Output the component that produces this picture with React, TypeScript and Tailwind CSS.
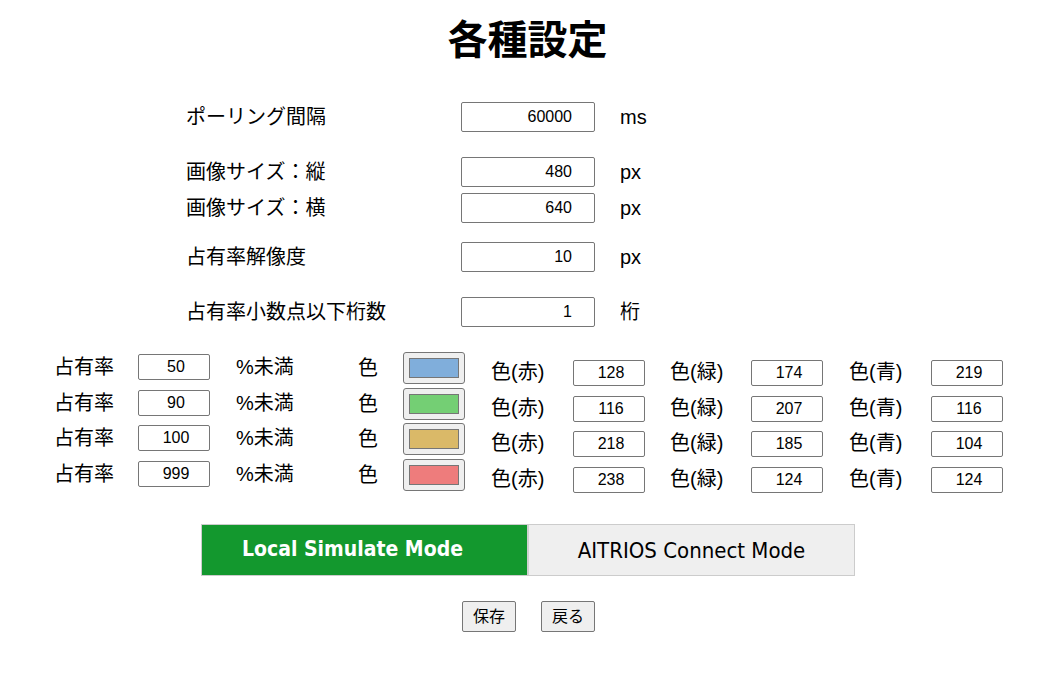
import React from "react";

const FONT = { fontFamily: '"Liberation Sans","Noto Sans CJK JP",sans-serif' };

function TopRow({ label, value, unit, mt }: { label: string; value: string; unit: string; mt: string }) {
  return (
    <div className={`flex items-center h-[30px] ${mt}`}>
      <div className="w-[275px] text-[20px] leading-[30px] text-black">{label}</div>
      <input
        readOnly
        value={value}
        className="block w-[134px] h-[30px] border border-[#767676] rounded-[2px] text-right pr-[22px] text-[16px] text-black bg-white outline-none"
        style={FONT}
      />
      <div className="ml-[25px] text-[20px] leading-[30px] text-black">{unit}</div>
    </div>
  );
}

function SmallInput({ value }: { value: string }) {
  return (
    <input
      readOnly
      value={value}
      className="block w-[72px] h-[26px] border border-[#767676] rounded-[2px] text-center pl-[4px] text-[16px] text-black bg-white outline-none"
      style={FONT}
    />
  );
}

const rows = [
  { th: "50", swatch: "#80aedb", r: "128", g: "174", b: "219" },
  { th: "90", swatch: "#74cf74", r: "116", g: "207", b: "116" },
  { th: "100", swatch: "#dab968", r: "218", g: "185", b: "104" },
  { th: "999", swatch: "#ee7c7c", r: "238", g: "124", b: "124" },
];

export default function App() {
  return (
    <div className="w-[1063px] h-[694px] bg-white text-black overflow-hidden" style={FONT}>
      <h1 className="text-center text-[40px] font-bold leading-[40px] pt-[20px] pr-[8px]">各種設定</h1>

      <div className="ml-[186px] mt-[42px]">
        <TopRow label="ポーリング間隔" value="60000" unit="ms" mt="mt-0" />
        <TopRow label="画像サイズ：縦" value="480" unit="px" mt="mt-[25px]" />
        <TopRow label="画像サイズ：横" value="640" unit="px" mt="mt-[6px]" />
        <TopRow label="占有率解像度" value="10" unit="px" mt="mt-[19px]" />
        <TopRow label="占有率小数点以下桁数" value="1" unit="桁" mt="mt-[25px]" />
      </div>

      <div className="mt-[25px]">
        {rows.map((row, i) => (
          <div key={i} className="flex items-start h-[35.5px] text-[20px] leading-[30px]">
            <div className="ml-[54px] w-[84px]">占有率</div>
            <div className="w-[98px] pt-[2px]">
              <SmallInput value={row.th} />
            </div>
            <div className="w-[122px]">%未満</div>
            <div className="w-[45px] pt-[1px]">色</div>
            <div className="w-[88px]">
              <div className="w-[62px] h-[32px] border border-[#767676] rounded-[3px] bg-[#efefef] flex items-center justify-center">
                <div className="w-[50px] h-[20px] border border-[#767676]" style={{ backgroundColor: row.swatch }} />
              </div>
            </div>
            <div className="w-[82px] pt-[5px]">色(赤)</div>
            <div className="w-[97px] pt-[8px]">
              <SmallInput value={row.r} />
            </div>
            <div className="w-[81px] pt-[5px]">色(緑)</div>
            <div className="w-[98px] pt-[8px]">
              <SmallInput value={row.g} />
            </div>
            <div className="w-[82px] pt-[5px]">色(青)</div>
            <div className="pt-[8px]">
              <SmallInput value={row.b} />
            </div>
          </div>
        ))}
      </div>

      <div
        className="ml-[201px] mt-[30px] w-[654px] h-[52px] border border-[#cccccc] flex"
        style={{ fontFamily: '"DejaVu Sans Condensed","DejaVu Sans",sans-serif' }}
      >
        <div className="w-[325px] h-full bg-[#13982e] text-white font-bold text-[21px] flex items-center justify-center pr-[24px]">
          Local Simulate Mode
        </div>
        <div className="w-[2px] h-full bg-[#d0d0d0]" />
        <div className="flex-1 h-full bg-[#efefef] text-[22px] text-black flex items-center justify-center">
          AITRIOS Connect Mode
        </div>
      </div>

      <div className="flex justify-center gap-[25px] mt-[25px]">
        <button className="ml-[-6px] h-[31px] px-[10px] border border-[#767676] rounded-[2px] bg-[#efefef] text-[16px] leading-[29px]">
          保存
        </button>
        <button className="h-[31px] px-[10px] border border-[#767676] rounded-[2px] bg-[#efefef] text-[16px] leading-[29px]">
          戻る
        </button>
      </div>
    </div>
  );
}
